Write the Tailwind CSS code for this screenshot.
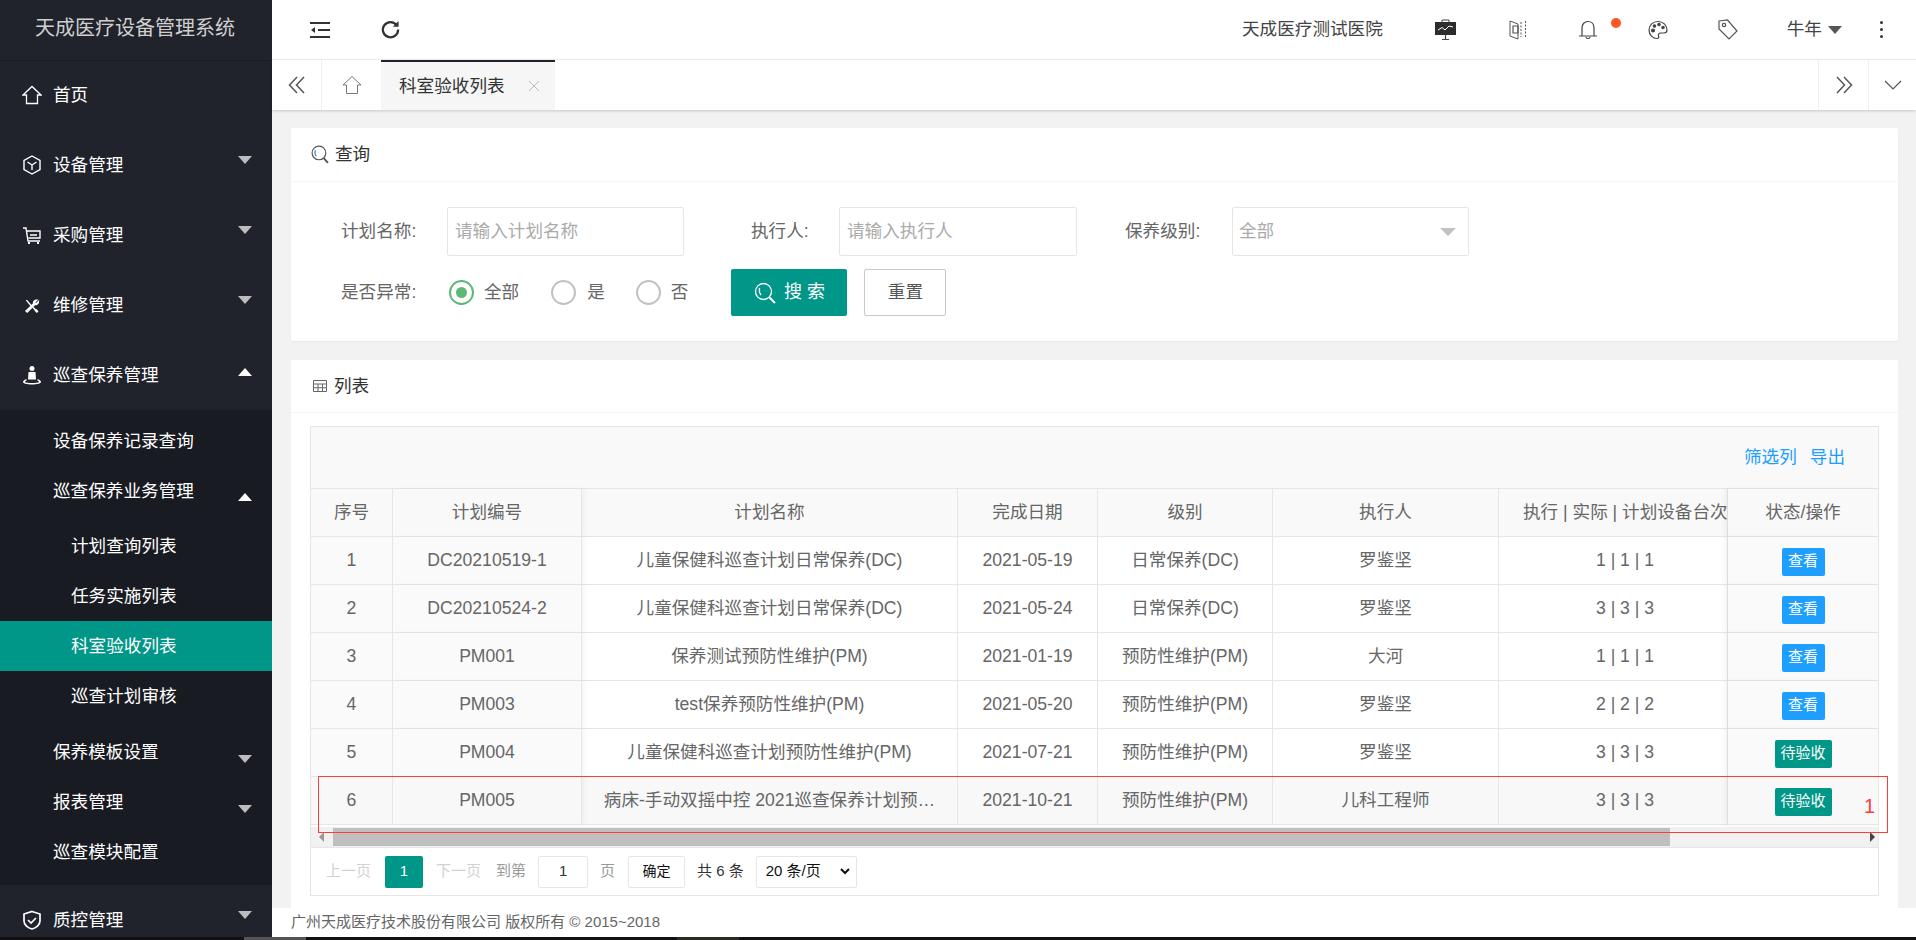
<!DOCTYPE html>
<html lang="zh-CN">
<head>
  <meta charset="UTF-8" />
  <title>科室验收列表</title>
  <script src="https://cdn.jsdelivr.net/npm/@tailwindcss/browser@4"></script>
</head>
<body class="bg-[#f2f2f2]">
<div class="w-[1916px] h-[940px] overflow-hidden flex flex-col text-[17.6px] text-[#666] font-['Liberation_Sans','Noto_Sans_CJK_SC',sans-serif]">
  <div class="flex h-[937px]">

    <!-- sidebar -->
    <aside class="w-[272px] shrink-0 bg-[#20232c] text-white overflow-hidden">
      <div class="h-[60px] flex items-center pl-[35px] pb-[4px] text-[20px] text-[#cfcfcf] shadow-[0_1px_1px_rgba(0,0,0,0.15)]">天成医疗设备管理系统</div>

      <a class="h-[70px] flex items-center pl-[22px]">
        <svg class="w-[20px] h-[20px]" viewBox="0 0 20 20" fill="none" stroke="#fff" stroke-width="1.3"><path d="M1 10 10 1.5 19 10H15.5V18.5H4.5V10Z"/></svg>
        <span class="ml-[11px]">首页</span>
      </a>
      <a class="h-[70px] flex items-center pl-[22px] relative">
        <svg class="w-[20px] h-[20px]" viewBox="0 0 20 20" fill="none" stroke="#fff" stroke-width="1.4"><path d="M10 1 18 5.5V14.5L10 19 2 14.5V5.5Z"/><path d="M5.5 7 10 10 14.5 7M10 10V15"/></svg>
        <span class="ml-[11px]">设备管理</span>
        <i class="absolute left-[238px] top-[26px] border-x-[7.5px] border-x-transparent border-t-[8px] border-t-[#bdbdbd]"></i>
      </a>
      <a class="h-[70px] flex items-center pl-[22px] relative">
        <svg class="w-[20px] h-[20px]" viewBox="0 0 20 20" fill="none" stroke="#fff" stroke-width="1.4"><path d="M1 3H4L6 16H18M5 6H18V13H6.5M8 10H15"/><path d="M7 17V19M16 17V19" stroke-width="2"/></svg>
        <span class="ml-[11px]">采购管理</span>
        <i class="absolute left-[238px] top-[26px] border-x-[7.5px] border-x-transparent border-t-[8px] border-t-[#bdbdbd]"></i>
      </a>
      <a class="h-[70px] flex items-center pl-[24px] relative">
        <svg class="w-[16px] h-[17px] mt-[3px]" viewBox="0 0 20 20" fill="none" stroke="#fff" stroke-width="1.8"><path d="M3 2 9 9M17 17 11 11"/><path d="M16 2 13 5 15 7 18 4C18 7 15 8 13.500 7.500L4 17 2.500 15.500 12 6.500C11.500 4.500 13 2 16 2Z"/><path d="M14 14 17 17" stroke-width="3"/></svg>
        <span class="ml-[13px]">维修管理</span>
        <i class="absolute left-[238px] top-[26px] border-x-[7.5px] border-x-transparent border-t-[8px] border-t-[#bdbdbd]"></i>
      </a>
      <a class="h-[70px] flex items-center pl-[22px] relative">
        <svg class="w-[20px] h-[20px]" viewBox="0 0 20 20" fill="#fff"><circle cx="10" cy="3.500" r="2.500"/><path d="M6.500 7H13.500L14 14.500H6Z"/><path d="M4.500 14C2 15 1 16 1 17 1 18.500 5 19.500 10 19.500S19 18.500 19 17C19 16 18 15 15.500 14L15.500 15.500C16.500 16 17 16.500 17 17 17 17.500 14 18 10 18S3 17.500 3 17C3 16.500 3.500 16 4.500 15.500Z"/></svg>
        <span class="ml-[11px]">巡查保养管理</span>
        <i class="absolute left-[238px] top-[28px] border-x-[7.5px] border-x-transparent border-b-[8px] border-b-white"></i>
      </a>

      <div class="h-[475px] bg-[#191b22] pt-[6px]">
        <a class="h-[50px] flex items-center pl-[53px]">设备保养记录查询</a>
        <a class="h-[50px] flex items-center pl-[53px] relative">巡查保养业务管理
          <i class="absolute left-[238px] top-[27px] border-x-[7.5px] border-x-transparent border-b-[8px] border-b-white"></i>
        </a>
        <div class="pt-[5px] pb-[6px]">
          <a class="h-[50px] flex items-center pl-[71px]">计划查询列表</a>
          <a class="h-[50px] flex items-center pl-[71px]">任务实施列表</a>
          <a class="h-[50px] flex items-center pl-[71px] bg-[#009688]">科室验收列表</a>
          <a class="h-[50px] flex items-center pl-[71px]">巡查计划审核</a>
        </div>
        <a class="h-[50px] flex items-center pl-[53px] relative">保养模板设置
          <i class="absolute left-[238px] top-[28px] border-x-[7.5px] border-x-transparent border-t-[8px] border-t-[#bdbdbd]"></i>
        </a>
        <a class="h-[50px] flex items-center pl-[53px] relative">报表管理
          <i class="absolute left-[238px] top-[28px] border-x-[7.5px] border-x-transparent border-t-[8px] border-t-[#bdbdbd]"></i>
        </a>
        <a class="h-[50px] flex items-center pl-[53px]">巡查模块配置</a>
      </div>

      <a class="h-[70px] flex items-center pl-[22px] relative">
        <svg class="w-[20px] h-[20px]" viewBox="0 0 20 20" fill="none" stroke="#fff" stroke-width="1.700"><path d="M10 1.500 18 4V11C18 15 14 18 10 19 6 18 2 15 2 11V4Z"/><path d="M6 10 9 13 14 8"/></svg>
        <span class="ml-[11px]">质控管理</span>
        <i class="absolute left-[238px] top-[26px] border-x-[7.5px] border-x-transparent border-t-[8px] border-t-[#bdbdbd]"></i>
      </a>
    </aside>

    <main class="flex-1 flex flex-col min-w-0">
      <!-- header -->
      <header class="h-[60px] bg-white border-b border-[#f0f0f0] flex items-center relative">
        <svg class="ml-[38px] w-[20px] h-[18px]" viewBox="0 0 20 18" fill="none" stroke="#333" stroke-width="2"><path d="M0 2H20M8 9H20M0 16H20"/><path d="M5 6V12L1 9Z" fill="#333" stroke="none"/></svg>
        <svg class="ml-[51px] w-[19px] h-[19px]" viewBox="0 0 20 20" fill="none" stroke="#333" stroke-width="2.400"><path d="M16.500 5.500A8 8 0 1 0 18 10"/><path d="M18.500 1V7H12.500" fill="#333" stroke="none"/></svg>
        <span class="ml-[842px] text-[#444]">天成医疗测试医院</span>
        <svg class="ml-[52px] w-[21px] h-[21px]" viewBox="0 0 21 21"><path d="M7 3V1H14V3" fill="none" stroke="#444"/><rect y="3" width="21" height="13" fill="#2d2d2d"/><path d="M3 11 7 8.500 10 11 14 7 18 8" fill="none" stroke="#fff"/><path d="M10.500 16V20M7 20.500H14" stroke="#444" stroke-width="1.200"/></svg>
        <svg class="ml-[53px] w-[18px] h-[21px]" viewBox="0 0 18 21" fill="none" stroke="#555"><path d="M1 2 9 5V20L1 17Z"/><path d="M4 7H9V14H4Z" stroke-width="1.200"/><path d="M12 3V18M16.500 2V19" stroke-dasharray="2 1.500"/></svg>
        <svg class="ml-[52px] w-[18px] h-[20px]" viewBox="0 0 18 20" fill="none" stroke="#444" stroke-width="1.200"><path d="M0 16H18M3 16V8C3 4 5.500 1.500 9 1.500S15 4 15 8V16"/><path d="M7 17C7 19 11 19 11 17"/></svg>
        <span class="absolute left-[1339px] top-[18px] w-[10px] h-[10px] rounded-full bg-[#ff5722]"></span>
        <svg class="ml-[51px] w-[20px] h-[20px]" viewBox="0 0 20 20" fill="none" stroke="#444" stroke-width="1.200"><path d="M10 1.500C5 1.500 1 5 1 10S5 18.500 9 18.500C11 18.500 11 17 10.500 16 10 14.500 11 13 12.500 13H16C18 13 19 12 19 10 19 5 15 1.500 10 1.500Z"/><circle cx="5" cy="10.500" r="1.500" fill="#444"/><circle cx="6.500" cy="6" r="1.200" fill="#444"/><circle cx="11" cy="4.500" r="1.200" fill="#444"/><circle cx="15" cy="7.500" r="1.200" fill="#444"/></svg>
        <svg class="ml-[50px] w-[20px] h-[21px]" viewBox="0 0 20 21" fill="none" stroke="#555" stroke-width="1.200"><path d="M1 2 9.500 1 19 12 11 20 1 10Z"/><circle cx="6" cy="6" r="1.700"/></svg>
        <span class="ml-[49px] text-[#444]">牛年</span>
        <i class="ml-[6px] border-x-[7.5px] border-x-transparent border-t-[8px] border-t-[#555]"></i>
        <span class="ml-[38px] flex flex-col gap-[4px]">
          <i class="w-[3px] h-[3px] rounded-full bg-[#333]"></i>
          <i class="w-[3px] h-[3px] rounded-full bg-[#333]"></i>
          <i class="w-[3px] h-[3px] rounded-full bg-[#333]"></i>
        </span>
      </header>

      <!-- tabs -->
      <nav class="h-[50px] bg-white flex shadow-[0_1px_3px_rgba(0,0,0,0.18)] relative">
        <div class="w-[50px] flex items-center justify-center border-r border-[#f0f0f0]">
          <svg class="w-[18px] h-[18px]" viewBox="0 0 18 18" fill="none" stroke="#555" stroke-width="1.500"><path d="M9 1 1.500 9 9 17M16 1 8.500 9 16 17"/></svg>
        </div>
        <div class="w-[59px] flex items-center justify-center">
          <svg class="w-[20px] h-[20px]" viewBox="0 0 20 20" fill="none" stroke="#777" stroke-width="1"><path d="M1 10 10 1.500 19 10H15.500V18.500H4.500V10Z"/></svg>
        </div>
        <div class="w-[174px] bg-[#f6f6f6] border-t-[2px] border-[#20232c] flex items-center pl-[18px] text-[#333]">科室验收列表
          <svg class="ml-[24px] w-[10px] h-[10px]" viewBox="0 0 10 10" stroke="#bbb"><path d="M0 0 10 10M10 0 0 10"/></svg>
        </div>
        <div class="ml-auto w-[50px] flex items-center justify-center border-l border-[#f0f0f0]">
          <svg class="w-[18px] h-[18px]" viewBox="0 0 18 18" fill="none" stroke="#555" stroke-width="1.500"><path d="M9 1 16.500 9 9 17M2 1 9.500 9 2 17"/></svg>
        </div>
        <div class="w-[48px] flex items-center justify-center border-l border-[#f0f0f0]">
          <svg class="w-[18px] h-[10px]" viewBox="0 0 18 10" fill="none" stroke="#555" stroke-width="1.200"><path d="M1 1 9 9 17 1"/></svg>
        </div>
      </nav>

      <!-- content -->
      <section class="flex-1 min-h-0 overflow-hidden pt-[18px] pl-[19px] pr-[18px]">
        <div class="h-[213px] bg-white rounded-[2px] shadow-[0_1px_2px_rgba(0,0,0,0.05)]">
          <div class="h-[54px] border-b border-[#f6f6f6] flex items-center pl-[20px] text-[#333]">
            <svg class="w-[18px] h-[19px] mr-[6px]" viewBox="0 0 17 18" fill="none" stroke="#555" stroke-width="1.100"><circle cx="7.500" cy="7.500" r="6.500"/><path d="M12 12.500 16 17" stroke-width="1.800"/><path d="M4 5C3.500 7 3.500 9 5 10.500" stroke="#2b7fc9"/></svg>
            查询
          </div>
          <div class="pt-[25px] pl-[50px]">
            <div class="flex items-center h-[49px]">
              <label class="w-[77px]">计划名称:</label>
              <div class="ml-[29px] w-[237px] h-[49px] border border-[#e6e6e6] rounded-[2px] flex items-center pl-[7px] text-[#aaa]">请输入计划名称</div>
              <label class="ml-[67px] w-[60px]">执行人:</label>
              <div class="ml-[28px] w-[238px] h-[49px] border border-[#e6e6e6] rounded-[2px] flex items-center pl-[7px] text-[#aaa]">请输入执行人</div>
              <label class="ml-[48px] w-[79px]">保养级别:</label>
              <div class="ml-[28px] w-[237px] h-[49px] border border-[#e6e6e6] rounded-[2px] flex items-center justify-between pl-[6px] pr-[12px] text-[#aaa]">全部
                <i class="border-x-[8px] border-x-transparent border-t-[8px] border-t-[#c2c2c2]"></i>
              </div>
            </div>
            <div class="flex items-center h-[47px] mt-[13px]">
              <label class="w-[77px]">是否异常:</label>
              <span class="ml-[31px] w-[25px] h-[25px] rounded-full border-2 border-[#5fb878] flex items-center justify-center"><i class="w-[11px] h-[11px] rounded-full bg-[#5fb878]"></i></span>
              <span class="ml-[10px]">全部</span>
              <span class="ml-[32px] w-[25px] h-[25px] rounded-full border-2 border-[#c2c2c2]"></span>
              <span class="ml-[11px]">是</span>
              <span class="ml-[31px] w-[25px] h-[25px] rounded-full border-2 border-[#c2c2c2]"></span>
              <span class="ml-[10px]">否</span>
              <button class="ml-[43px] w-[116px] h-[47px] bg-[#009688] text-white text-[18px] rounded-[2px] flex items-center justify-center">
                <svg class="w-[22px] h-[22px] mr-[8px]" viewBox="0 0 22 22" fill="none" stroke="#fff" stroke-width="1.300"><circle cx="9.500" cy="9.500" r="8"/><path d="M15.500 15.500 21 21" stroke-width="2"/><path d="M5.500 6C5 8.500 5 10.500 7 13"/></svg>
                搜 索
              </button>
              <button class="ml-[17px] w-[82px] h-[47px] bg-white border border-[#c9c9c9] rounded-[2px] text-[#555]">重置</button>
            </div>
          </div>
        </div>

        <div class="mt-[19px] h-[600px] bg-white rounded-[2px]">
          <div class="h-[53px] border-b border-[#f6f6f6] flex items-center pl-[22px] text-[#333]">
            <svg class="w-[14px] h-[12px] mr-[7px]" viewBox="0 0 14 12" fill="none" stroke="#666"><path d="M.5.5H13.500V11.500H.5ZM.5 4H13.500M.5 7.750H13.500M5 4V11.500M9.500 4V11.500"/></svg>
            列表
          </div>
          <div class="mt-[13px] ml-[19px] w-[1569px] h-[470px] border border-[#e6e6e6]">
            <div class="h-[62px] bg-[#f9f9f9] border-b border-[#e6e6e6] flex items-center justify-end gap-[13px] pr-[33px] text-[#1e9fff]">
              <span>筛选列</span><span>导出</span>
            </div>
            <table class="table-fixed border-separate border-spacing-0 w-[1567px] text-center">
              <colgroup>
                <col class="w-[82px]"><col class="w-[189px]"><col class="w-[376px]"><col class="w-[140px]"><col class="w-[175px]"><col class="w-[226px]"><col class="w-[229px]"><col class="w-[150px]">
              </colgroup>
              <thead class="bg-[#f9f9f9] font-normal">
                <tr class="h-[48px]">
                  <th class="font-normal border-b border-r border-[#e6e6e6]">序号</th>
                  <th class="font-normal border-b border-r border-[#e6e6e6] relative z-10 shadow-[3px_0_5px_rgba(0,0,0,0.04)]">计划编号</th>
                  <th class="font-normal border-b border-r border-[#e6e6e6]">计划名称</th>
                  <th class="font-normal border-b border-r border-[#e6e6e6]">完成日期</th>
                  <th class="font-normal border-b border-r border-[#e6e6e6]">级别</th>
                  <th class="font-normal border-b border-r border-[#e6e6e6]">执行人</th>
                  <th class="font-normal border-b border-r border-[#e6e6e6] pl-[24px] whitespace-nowrap overflow-hidden">执行 | 实际 | 计划设备台次</th>
                  <th class="font-normal border-b border-[#e6e6e6] relative z-10 shadow-[-3px_0_5px_rgba(0,0,0,0.05)]">状态/操作</th>
                </tr>
              </thead>
              <tbody>
                <tr class="h-[48px]">
                  <td class="bg-[#fafafa] border-b border-r border-[#e6e6e6]">1</td>
                  <td class="bg-[#fafafa] border-b border-r border-[#e6e6e6] relative z-10 shadow-[3px_0_5px_rgba(0,0,0,0.04)]">DC20210519-1</td>
                  <td class="border-b border-r border-[#e6e6e6]">儿童保健科巡查计划日常保养(DC)</td>
                  <td class="border-b border-r border-[#e6e6e6]">2021-05-19</td>
                  <td class="border-b border-r border-[#e6e6e6]">日常保养(DC)</td>
                  <td class="border-b border-r border-[#e6e6e6]">罗鉴坚</td>
                  <td class="border-b border-r border-[#e6e6e6] pl-[24px]">1 | 1 | 1</td>
                  <td class="bg-[#fafafa] border-b border-[#e6e6e6] relative z-10 shadow-[-3px_0_5px_rgba(0,0,0,0.05)]"><span class="inline-flex items-center justify-center w-[43px] h-[28px] mt-[2px] rounded-[2px] bg-[#1e9fff] text-white text-[15px]">查看</span></td>
                </tr>
                <tr class="h-[48px]">
                  <td class="bg-[#fafafa] border-b border-r border-[#e6e6e6]">2</td>
                  <td class="bg-[#fafafa] border-b border-r border-[#e6e6e6] relative z-10 shadow-[3px_0_5px_rgba(0,0,0,0.04)]">DC20210524-2</td>
                  <td class="border-b border-r border-[#e6e6e6]">儿童保健科巡查计划日常保养(DC)</td>
                  <td class="border-b border-r border-[#e6e6e6]">2021-05-24</td>
                  <td class="border-b border-r border-[#e6e6e6]">日常保养(DC)</td>
                  <td class="border-b border-r border-[#e6e6e6]">罗鉴坚</td>
                  <td class="border-b border-r border-[#e6e6e6] pl-[24px]">3 | 3 | 3</td>
                  <td class="bg-[#fafafa] border-b border-[#e6e6e6] relative z-10 shadow-[-3px_0_5px_rgba(0,0,0,0.05)]"><span class="inline-flex items-center justify-center w-[43px] h-[28px] mt-[2px] rounded-[2px] bg-[#1e9fff] text-white text-[15px]">查看</span></td>
                </tr>
                <tr class="h-[48px]">
                  <td class="bg-[#fafafa] border-b border-r border-[#e6e6e6]">3</td>
                  <td class="bg-[#fafafa] border-b border-r border-[#e6e6e6] relative z-10 shadow-[3px_0_5px_rgba(0,0,0,0.04)]">PM001</td>
                  <td class="border-b border-r border-[#e6e6e6]">保养测试预防性维护(PM)</td>
                  <td class="border-b border-r border-[#e6e6e6]">2021-01-19</td>
                  <td class="border-b border-r border-[#e6e6e6]">预防性维护(PM)</td>
                  <td class="border-b border-r border-[#e6e6e6]">大河</td>
                  <td class="border-b border-r border-[#e6e6e6] pl-[24px]">1 | 1 | 1</td>
                  <td class="bg-[#fafafa] border-b border-[#e6e6e6] relative z-10 shadow-[-3px_0_5px_rgba(0,0,0,0.05)]"><span class="inline-flex items-center justify-center w-[43px] h-[28px] mt-[2px] rounded-[2px] bg-[#1e9fff] text-white text-[15px]">查看</span></td>
                </tr>
                <tr class="h-[48px]">
                  <td class="bg-[#fafafa] border-b border-r border-[#e6e6e6]">4</td>
                  <td class="bg-[#fafafa] border-b border-r border-[#e6e6e6] relative z-10 shadow-[3px_0_5px_rgba(0,0,0,0.04)]">PM003</td>
                  <td class="border-b border-r border-[#e6e6e6]">test保养预防性维护(PM)</td>
                  <td class="border-b border-r border-[#e6e6e6]">2021-05-20</td>
                  <td class="border-b border-r border-[#e6e6e6]">预防性维护(PM)</td>
                  <td class="border-b border-r border-[#e6e6e6]">罗鉴坚</td>
                  <td class="border-b border-r border-[#e6e6e6] pl-[24px]">2 | 2 | 2</td>
                  <td class="bg-[#fafafa] border-b border-[#e6e6e6] relative z-10 shadow-[-3px_0_5px_rgba(0,0,0,0.05)]"><span class="inline-flex items-center justify-center w-[43px] h-[28px] mt-[2px] rounded-[2px] bg-[#1e9fff] text-white text-[15px]">查看</span></td>
                </tr>
                <tr class="h-[48px]">
                  <td class="bg-[#fafafa] border-b border-r border-[#e6e6e6]">5</td>
                  <td class="bg-[#fafafa] border-b border-r border-[#e6e6e6] relative z-10 shadow-[3px_0_5px_rgba(0,0,0,0.04)]">PM004</td>
                  <td class="border-b border-r border-[#e6e6e6]">儿童保健科巡查计划预防性维护(PM)</td>
                  <td class="border-b border-r border-[#e6e6e6]">2021-07-21</td>
                  <td class="border-b border-r border-[#e6e6e6]">预防性维护(PM)</td>
                  <td class="border-b border-r border-[#e6e6e6]">罗鉴坚</td>
                  <td class="border-b border-r border-[#e6e6e6] pl-[24px]">3 | 3 | 3</td>
                  <td class="bg-[#fafafa] border-b border-[#e6e6e6] relative z-10 shadow-[-3px_0_5px_rgba(0,0,0,0.05)]"><span class="inline-flex items-center justify-center w-[57px] h-[28px] mt-[2px] rounded-[2px] bg-[#009688] text-white text-[15px]">待验收</span></td>
                </tr>
                <tr class="h-[48px] bg-[#f8f8f8]">
                  <td class="bg-[#f8f8f8] border-b border-r border-[#e6e6e6]">6</td>
                  <td class="bg-[#f8f8f8] border-b border-r border-[#e6e6e6] relative z-10 shadow-[3px_0_5px_rgba(0,0,0,0.04)]">PM005</td>
                  <td class="border-b border-r border-[#e6e6e6]">病床-手动双摇中控 2021巡查保养计划预…</td>
                  <td class="border-b border-r border-[#e6e6e6]">2021-10-21</td>
                  <td class="border-b border-r border-[#e6e6e6]">预防性维护(PM)</td>
                  <td class="border-b border-r border-[#e6e6e6]">儿科工程师</td>
                  <td class="border-b border-r border-[#e6e6e6] pl-[24px]">3 | 3 | 3</td>
                  <td class="bg-[#f8f8f8] border-b border-[#e6e6e6] relative z-10 shadow-[-3px_0_5px_rgba(0,0,0,0.05)]"><span class="inline-flex items-center justify-center w-[57px] h-[28px] mt-[2px] rounded-[2px] bg-[#009688] text-white text-[15px]">待验收</span></td>
                </tr>
              </tbody>
            </table>
            <div class="mt-[2px] h-[20px] bg-[#f1f1f1] flex items-center">
              <i class="ml-[8px] border-y-[5px] border-y-transparent border-r-[5px] border-r-[#999]"></i>
              <div class="ml-[9px] w-[1337px] h-[18px] bg-[#bfbfbf]"></div>
              <i class="ml-[200px] border-y-[5px] border-y-transparent border-l-[5px] border-l-[#444]"></i>
            </div>
            <div class="h-[48px] flex items-center border-t border-[#e6e6e6] pl-[15px] text-[15px]">
              <span class="text-[#d2d2d2]">上一页</span>
              <span class="ml-[14px] w-[38px] h-[32px] bg-[#009688] text-white rounded-[2px] flex items-center justify-center">1</span>
              <span class="ml-[13px] text-[#d2d2d2]">下一页</span>
              <span class="ml-[15px] text-[#999]">到第</span>
              <span class="ml-[12px] w-[50px] h-[32px] border border-[#e6e6e6] rounded-[2px] flex items-center justify-center text-[#333]">1</span>
              <span class="ml-[12px] text-[#999]">页</span>
              <span class="ml-[13px] w-[57px] h-[32px] border border-[#e6e6e6] rounded-[2px] flex items-center justify-center text-[#111] text-[14px]">确定</span>
              <span class="ml-[12px] text-[#333]">共 6 条</span>
              <span class="ml-[12px] w-[101px] h-[32px] border border-[#e6e6e6] rounded-[2px] flex items-center pl-[9px] text-[#111] justify-between pr-[6px]">20 条/页
                <svg class="w-[10px] h-[7px]" viewBox="0 0 10 7" fill="none" stroke="#111" stroke-width="2"><path d="M1 1 5 5 9 1"/></svg>
              </span>
            </div>
          </div>
        </div>
      </section>

      <footer class="h-[29px] bg-white flex items-center pl-[19px] text-[15px] text-[#666]">广州天成医疗技术股份有限公司 版权所有 © 2015~2018</footer>
    </main>
  </div>
  <div class="h-[3px] bg-[#111] flex">
    <i class="ml-[244px] w-[62px] bg-[#555]"></i>
    <i class="ml-[371px] w-[62px] bg-[#2a2a20]"></i>
  </div>

  <!-- red annotation -->
  <div class="absolute left-[318px] top-[776px] w-[1570px] h-[57px] border border-[#ff3b3b] pointer-events-none z-20">
    <span class="absolute right-[12px] top-[17px] text-[20px] leading-[24px] text-[#ff3b3b]">1</span>
  </div>
</div>
</body>
</html>
